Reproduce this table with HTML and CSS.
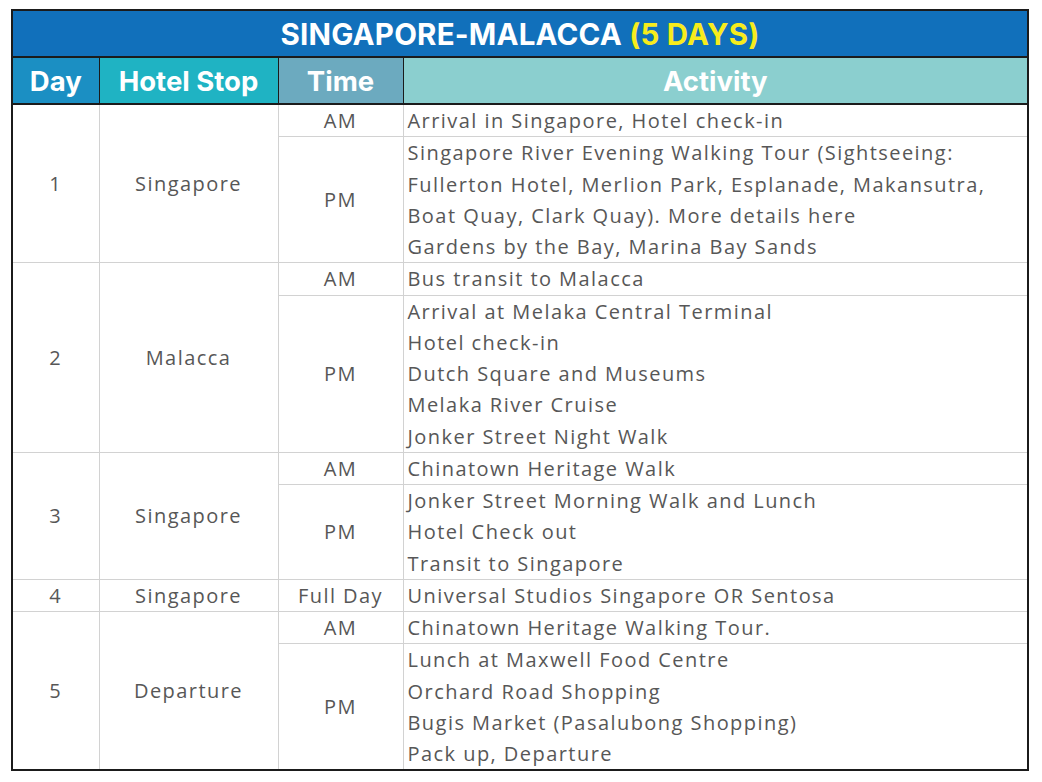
FILE: index.html
```html
<!DOCTYPE html>
<html>
<head>
<meta charset="utf-8">
<link rel="stylesheet" href="styles.css">
</head>
<body>
<table class="itinerary">
  <colgroup>
    <col class="c-day"><col class="c-hotel"><col class="c-time"><col class="c-act">
  </colgroup>
  <thead>
    <tr class="title-row">
      <th colspan="4"><span class="title-main">SINGAPORE-MALACCA</span> <span class="title-days">(5 DAYS)</span></th>
    </tr>
    <tr class="head-row">
      <th class="h-day">Day</th>
      <th class="h-hotel">Hotel Stop</th>
      <th class="h-time">Time</th>
      <th class="h-act">Activity</th>
    </tr>
  </thead>
  <tbody>
    <tr>
      <td rowspan="2" class="day">1</td>
      <td rowspan="2" class="hotel">Singapore</td>
      <td class="time">AM</td>
      <td class="act"><span class="line">Arrival in Singapore, Hotel check-in</span></td>
    </tr>
    <tr>
      <td class="time">PM</td>
      <td class="act">
        <span class="line">Singapore River Evening Walking Tour (Sightseeing:</span>
        <span class="line">Fullerton Hotel, Merlion Park, Esplanade, Makansutra,</span>
        <span class="line">Boat Quay, Clark Quay). More details here</span>
        <span class="line">Gardens by the Bay, Marina Bay Sands</span>
      </td>
    </tr>
    <tr>
      <td rowspan="2" class="day">2</td>
      <td rowspan="2" class="hotel">Malacca</td>
      <td class="time">AM</td>
      <td class="act"><span class="line">Bus transit to Malacca</span></td>
    </tr>
    <tr>
      <td class="time">PM</td>
      <td class="act">
        <span class="line">Arrival at Melaka Central Terminal</span>
        <span class="line">Hotel check-in</span>
        <span class="line">Dutch Square and Museums</span>
        <span class="line">Melaka River Cruise</span>
        <span class="line">Jonker Street Night Walk</span>
      </td>
    </tr>
    <tr>
      <td rowspan="2" class="day">3</td>
      <td rowspan="2" class="hotel">Singapore</td>
      <td class="time">AM</td>
      <td class="act"><span class="line">Chinatown Heritage Walk</span></td>
    </tr>
    <tr>
      <td class="time">PM</td>
      <td class="act">
        <span class="line">Jonker Street Morning Walk and Lunch</span>
        <span class="line">Hotel Check out</span>
        <span class="line">Transit to Singapore</span>
      </td>
    </tr>
    <tr>
      <td class="day">4</td>
      <td class="hotel">Singapore</td>
      <td class="time">Full Day</td>
      <td class="act"><span class="line">Universal Studios Singapore OR Sentosa</span></td>
    </tr>
    <tr>
      <td rowspan="2" class="day">5</td>
      <td rowspan="2" class="hotel">Departure</td>
      <td class="time">AM</td>
      <td class="act"><span class="line">Chinatown Heritage Walking Tour.</span></td>
    </tr>
    <tr>
      <td class="time">PM</td>
      <td class="act">
        <span class="line">Lunch at Maxwell Food Centre</span>
        <span class="line">Orchard Road Shopping</span>
        <span class="line">Bugis Market (Pasalubong Shopping)</span>
        <span class="line">Pack up, Departure</span>
      </td>
    </tr>
  </tbody>
</table>
</body>
</html>
```

FILE: styles.css
```css
html, body {
  margin: 0;
  padding: 0;
  background: #ffffff;
}
body {
  padding: 9px 0 0 11px;
}
.itinerary {
  width: 1016px;
  border-collapse: collapse;
  table-layout: fixed;
  border: 2px solid #1b1b1b;
  font-family: "Open Sans", sans-serif;
}
.c-day { width: 87px; }
.c-hotel { width: 179px; }
.c-time { width: 125px; }
.c-act { width: 625px; }

.title-row th {
  background: #1170bb;
  height: 45px;
  padding: 0;
  border: 2px solid #1b1b1b;
  text-align: center;
  color: #ffffff;
  font-family: "Inter", sans-serif;
  font-weight: 700;
  font-size: 29.5px;
  letter-spacing: 0.2px;
}
.title-days {
  color: #f7ec1c;
}
.head-row th {
  height: 45px;
  padding: 0;
  border: 1px solid #1b1b1b;
  border-bottom: 2px solid #1b1b1b;
  color: #ffffff;
  font-family: "Inter", sans-serif;
  font-weight: 700;
  font-size: 27.5px;
  text-align: center;
}
.h-day { background: #1b8fc3; }
.h-hotel { background: #1fb3c3; }
.h-time { background: #6caabf; }
.h-act { background: #8bcfcf; font-family: "Open Sans", sans-serif; font-weight: 700; font-size: 25px; }

tbody td {
  border: 1px solid #d2d2d2;
  padding: 0;
  color: #575757;
  font-size: 20px;
  letter-spacing: 1.45px;
  line-height: 31.25px;
  vertical-align: middle;
}
tbody td.day, tbody td.hotel, tbody td.time {
  text-align: center;
}
tbody td.day {
  border-left: 2px solid #1b1b1b;
}
tbody td.act {
  padding-left: 4px;
  border-right: 2px solid #1b1b1b;
}
.line {
  display: block;
  white-space: nowrap;
}
```
